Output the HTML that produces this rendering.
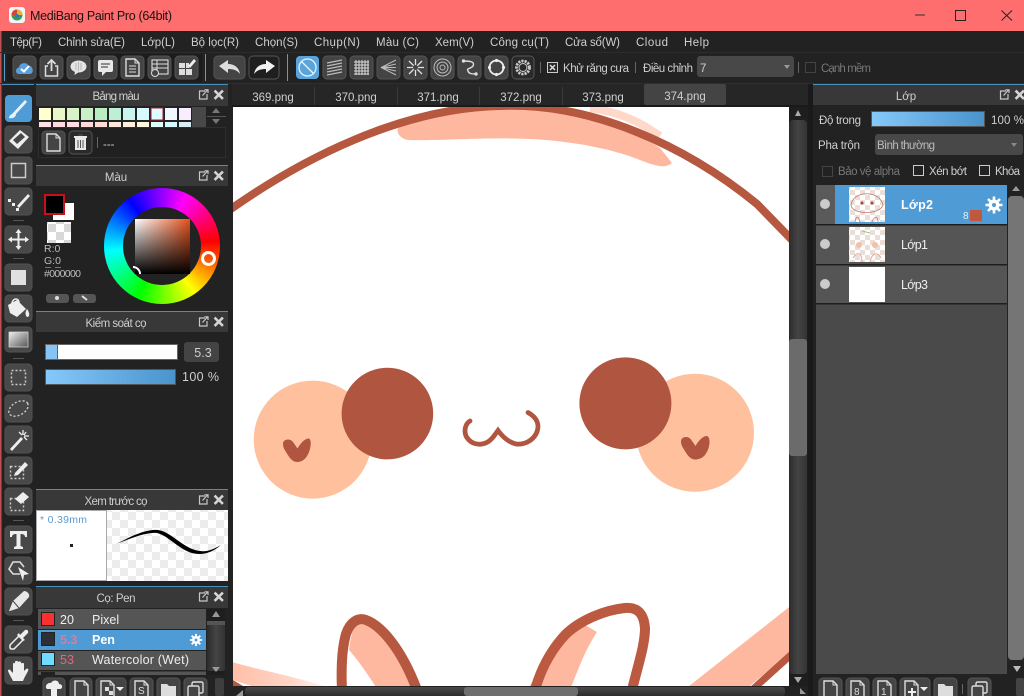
<!DOCTYPE html>
<html><head><meta charset="utf-8"><style>
html,body{margin:0;padding:0;width:1024px;height:696px;overflow:hidden;background:#222}
svg{position:absolute;left:0;top:0}
text{font-family:"Liberation Sans","Noto Sans CJK JP",sans-serif;font-size:11.5px;fill:#cfcfcf}
#wheel{position:absolute;left:104px;top:188px;width:116px;height:116px;border-radius:50%;background:conic-gradient(from 85deg,#f00,#ff0,#0f0,#0ff,#00f,#f0f,#f00)}
#hole{position:absolute;left:19px;top:19px;width:78px;height:78px;border-radius:50%;background:#222}
#sq{position:absolute;left:135px;top:219px;width:55px;height:55px;background:linear-gradient(to bottom,rgba(0,0,0,0),#000),linear-gradient(to right,#fff,#e4511c)}
#mk{position:absolute;left:201px;top:251px;width:9px;height:9px;border:3px solid #fff;border-radius:50%;background:#e8571c00;box-shadow:inset 0 0 0 1px #e06020}
#sm{position:absolute;left:133px;top:266px;width:8px;height:8px;border-top:2px solid #fff;border-right:2px solid #fff;border-radius:0 8px 0 0;box-sizing:border-box}
</style></head><body>
<svg width="1024" height="696" viewBox="0 0 1024 696" xmlns="http://www.w3.org/2000/svg">
<defs>
<pattern id="ck" width="16" height="16" patternUnits="userSpaceOnUse"><rect width="16" height="16" fill="#fff"/><rect width="8" height="8" fill="#ececec"/><rect x="8" y="8" width="8" height="8" fill="#ececec"/></pattern>
<pattern id="ck2" width="10" height="10" patternUnits="userSpaceOnUse"><rect width="10" height="10" fill="#fff"/><rect width="5" height="5" fill="#eadfd8"/><rect x="5" y="5" width="5" height="5" fill="#eadfd8"/></pattern>
<pattern id="ck3" width="16" height="16" patternUnits="userSpaceOnUse"><rect width="16" height="16" fill="#fff"/><rect width="8" height="8" fill="#d8d8d8"/><rect x="8" y="8" width="8" height="8" fill="#d8d8d8"/></pattern>
<linearGradient id="bar" x1="0" x2="1"><stop offset="0" stop-color="#86c8fa"/><stop offset="1" stop-color="#4a93cc"/></linearGradient>
<linearGradient id="sb" x1="0" x2="1"><stop offset="0" stop-color="#2c2c2c"/><stop offset=".5" stop-color="#444"/><stop offset="1" stop-color="#333"/></linearGradient>
<linearGradient id="sbh" x1="0" x2="0" y1="0" y2="1"><stop offset="0" stop-color="#4a4a4a"/><stop offset="1" stop-color="#2c2c2c"/></linearGradient>
<linearGradient id="gr" x1="0" x2="1" y1="0" y2="1"><stop offset="0" stop-color="#f0f0f0"/><stop offset="1" stop-color="#555"/></linearGradient>
<linearGradient id="fade1" x1="0" x2="1"><stop offset="0" stop-color="#ffbda6"/><stop offset=".6" stop-color="#ffd6c8"/><stop offset="1" stop-color="#ffe6dc" stop-opacity=".3"/></linearGradient>
<rect id="b" width="23" height="23" rx="4" fill="#444" stroke="#555"/>
<rect id="t" width="27" height="27" rx="4" fill="#484848" stroke="#525252"/>
<g id="pop"><path d="M7 2H1.500V10H9V5" fill="none" stroke="#c8c8c8" stroke-width="1.200"/><path d="M4.500 6.500L9.500 1M6.500 0.800H10V4" fill="none" stroke="#c8c8c8" stroke-width="1.200"/></g>
<g id="cl"><path d="M1.500 1.500L8 8M8 1.500L1.500 8" stroke="#d4d4d4" stroke-width="2.600" stroke-linecap="square"/></g>
<g id="gear"><circle r="5.500" fill="#fff"/><g stroke="#fff" stroke-width="2.600"><path d="M0-8.500V8.500M-8.500 0H8.500M-6-6L6 6M-6 6L6-6"/></g><circle r="2" fill="#4f9bd5"/></g>
<g id="docI"><path d="M5 3H14L18 7V20H5Z" fill="none" stroke="#ddd" stroke-width="1.400"/><path d="M14 3V7H18" fill="none" stroke="#ddd"/></g>
<g id="copyI"><rect x="8" y="4" width="11" height="11" rx="1.500" fill="none" stroke="#ddd" stroke-width="1.400"/><rect x="4" y="8" width="11" height="11" rx="1.500" fill="#444" stroke="#ddd" stroke-width="1.400"/></g>
<g id="folderI"><path d="M4 6H10L12 8H19V19H4Z" fill="#ddd"/></g>
</defs>

<!-- base -->
<rect width="1024" height="696" fill="#222"/>
<rect width="1024" height="31" fill="#ff6e6e"/>
<rect y="31" width="1.500" height="665" fill="#c05050"/>
<rect y="52" width="1024" height="1" fill="#2c2c2c"/>
<rect y="83" width="1024" height="1" fill="#2e2e2e"/>
<!-- title -->
<rect x="9" y="7" width="16" height="16" rx="3" fill="#f4f4f4"/>
<circle cx="17" cy="15" r="5.500" fill="#3c9a52"/><path d="M17 9.500A5.500 5.500 0 0 1 22.500 15H17Z" fill="#e9b530"/><path d="M11.500 15A5.500 5.500 0 0 1 17 9.500V15Z" fill="#d8443c"/><circle cx="17" cy="16" r="2" fill="#2f78c4"/>
<text x="30" y="20" style="font-size:12.500px;fill:#1c1010" textLength="142">MediBang Paint Pro (64bit)</text>
<path d="M915 15H925" stroke="#333" stroke-width="1"/>
<rect x="955.500" y="10.500" width="10" height="10" fill="none" stroke="#222"/>
<path d="M1001.500 10.500L1012 20.500M1012 10.500L1001.500 20.500" stroke="#222" stroke-width="1"/>
<!-- menu -->
<text x="10" y="46" textLength="32">Tệp(F)</text>
<text x="58" y="46" textLength="67">Chỉnh sửa(E)</text>
<text x="141" y="46" textLength="34">Lớp(L)</text>
<text x="191" y="46" textLength="48">Bộ lọc(R)</text>
<text x="255" y="46" textLength="43">Chọn(S)</text>
<text x="314" y="46" textLength="46">Chụp(N)</text>
<text x="376" y="46" textLength="43">Màu (C)</text>
<text x="435" y="46" textLength="39">Xem(V)</text>
<text x="490" y="46" textLength="59">Công cụ(T)</text>
<text x="565" y="46" textLength="55">Cửa sổ(W)</text>
<text x="636" y="46" textLength="32">Cloud</text>
<text x="684" y="46" textLength="25">Help</text>
<!-- toolbar -->
<rect x="4" y="54" width="1" height="27" fill="#5a9ec8"/><rect x="205" y="54" width="1" height="27" fill="#5a9ec8"/><rect x="287" y="54" width="1" height="27" fill="#5a9ec8"/>
<rect x="7" y="54" width="195" height="28" fill="#1c1c1c"/>
<g transform="translate(13,56)"><use href="#b"/><path d="M6 18C2 18 2 12 6 11.500C6.500 7 13 5.500 15.500 9.500C19.500 9 22 17 17 18Z" fill="#5aa0dc"/><path d="M8 13L11 15.500L16 10" stroke="#fff" stroke-width="2" fill="none"/></g>
<g transform="translate(40,56)"><use href="#b"/><path d="M8 10H5.500V20H17.500V10H15" fill="none" stroke="#ddd" stroke-width="1.500"/><path d="M11.500 15V5M7.500 8L11.500 4L15.500 8" fill="none" stroke="#ddd" stroke-width="1.800"/></g>
<g transform="translate(67,56)"><use href="#b"/><ellipse cx="11.500" cy="10.500" rx="8" ry="6" fill="#e4e4e4"/><path d="M8 15L7.500 19L12 16Z" fill="#e4e4e4"/><path d="M9 7V14M11.500 6V15M14 7V14" stroke="#999" stroke-width=".6"/></g>
<g transform="translate(94,56)"><use href="#b"/><rect x="4" y="4" width="15" height="12" rx="2" fill="#e8e8e8"/><path d="M8 16V20L12 16Z" fill="#e8e8e8"/><path d="M7 8H16M7 11H14" stroke="#555" stroke-width="1.200"/></g>
<g transform="translate(121,56)"><use href="#b"/><use href="#docI"/><path d="M8 10H15M8 13H15M8 16H15" stroke="#ddd"/></g>
<g transform="translate(148,56)"><use href="#b"/><rect x="4" y="4" width="16" height="14" fill="none" stroke="#ddd" stroke-width="1.100"/><path d="M4 8H20M4 12H20M9 4V18" stroke="#ddd"/><circle cx="7" cy="17" r="3.500" fill="#444" stroke="#ddd"/></g>
<g transform="translate(175,56)"><use href="#b"/><path d="M4 7H10V12H4ZM11 7H14V12H11ZM4 13H10V19H4ZM11 13H17V19H11Z" fill="#ddd"/><path d="M13 10L19 3L21 5L15 12Z" fill="#eee"/></g>
<g transform="translate(214,56)"><rect width="31" height="23" rx="4" fill="#444" stroke="#555"/><path d="M5 10L14 4V8C21 8 25 12 26 18C23 14 19 13 14 13V17Z" fill="#ddd"/></g>
<g transform="translate(249,56)"><rect width="30" height="23" rx="4" fill="#1f1f1f" stroke="#555"/><path d="M26 10L17 4V8C10 8 6 12 5 18C8 14 12 13 17 13V17Z" fill="#f0f0f0"/></g>
<g transform="translate(296,56)"><rect width="23" height="23" rx="4" fill="#5aa4dc"/><circle cx="11.500" cy="11.500" r="8.500" fill="none" stroke="#e8f2fa" stroke-width="1.300"/><path d="M5.500 5.500L17.500 17.500" stroke="#e8f2fa" stroke-width="1.300"/></g>
<g transform="translate(323,56)"><use href="#b"/><path d="M4 7L19 4M4 10L19 7M4 13L19 10M4 16L19 13M4 19L19 16" stroke="#bbb" stroke-width="1.200"/></g>
<g transform="translate(350,56)"><use href="#b"/><path d="M6 4V19M9 4V19M12 4V19M15 4V19M18 4V19M4 6H19M4 9H19M4 12H19M4 15H19M4 18H19" stroke="#ddd"/></g>
<g transform="translate(377,56)"><use href="#b"/><path d="M4 11.500L19 4M4 11.500L19 8M4 11.500H19M4 11.500L19 15M4 11.500L19 19" stroke="#bbb"/></g>
<g transform="translate(404,56)"><use href="#b"/><path d="M11.500 3V20M3 11.500H20M5 5L18 18M18 5L5 18" stroke="#e0e0e0" stroke-width="1.300"/><circle cx="11.500" cy="11.500" r="2.500" fill="#444"/></g>
<g transform="translate(431,56)"><use href="#b"/><circle cx="11.500" cy="11.500" r="8.500" fill="none" stroke="#bbb"/><circle cx="11.500" cy="11.500" r="5.500" fill="none" stroke="#bbb"/><circle cx="11.500" cy="11.500" r="2.500" fill="none" stroke="#bbb"/></g>
<g transform="translate(458,56)"><use href="#b"/><path d="M6 5C13 5 17 6 15 10C13 13 8 12 10 15C11 18 14 18 18 18" fill="none" stroke="#ddd" stroke-width="1.400"/><circle cx="5.500" cy="5" r="1.700" fill="#ddd"/><circle cx="18" cy="18" r="1.700" fill="#ddd"/></g>
<g transform="translate(485,56)"><use href="#b"/><circle cx="11.500" cy="11.500" r="7" fill="none" stroke="#eee" stroke-width="1.800"/><g fill="#eee"><circle cx="11.500" cy="4.500" r="1.600"/><circle cx="18.500" cy="11.500" r="1.600"/><circle cx="11.500" cy="18.500" r="1.600"/><circle cx="4.500" cy="11.500" r="1.600"/></g></g>
<g transform="translate(512,56)"><rect width="22" height="23" rx="4" fill="#2a2a2a" stroke="#555"/><circle cx="11" cy="11.500" r="6.500" fill="none" stroke="#ccc" stroke-width="2.800" stroke-dasharray="2.200 1"/><circle cx="11" cy="11.500" r="4" fill="none" stroke="#ccc"/></g>
<rect x="540" y="62" width="1" height="11" fill="#666"/>
<rect x="547.500" y="62.500" width="10" height="10" fill="#2a2a2a" stroke="#ccc"/><path d="M550 65L555 70M555 65L550 70" stroke="#ddd" stroke-width="1.500"/>
<text x="563" y="72" textLength="66">Khử răng cưa</text>
<rect x="635" y="62" width="1" height="11" fill="#666"/>
<text x="643" y="72" textLength="50">Điều chỉnh</text>
<rect x="697" y="56" width="97" height="21" rx="3" fill="#484848"/>
<text x="700" y="72" fill="#ccc">7</text>
<path d="M784 65L790 65L787 69Z" fill="#999"/>
<rect x="798" y="62" width="1" height="11" fill="#666"/>
<rect x="805.500" y="62.500" width="10" height="10" fill="none" stroke="#444"/>
<text x="821" y="72" style="fill:#777" textLength="50">Cạnh mềm</text>

<!-- tabs -->
<rect x="232" y="84" width="576" height="23" fill="#262626"/>
<rect x="232" y="105" width="576" height="2" fill="#1a1a1a"/>
<path d="M314.500 87V105M397.500 87V105M479.500 87V105M562.500 87V105" stroke="#3a3a3a"/>
<rect x="644" y="84" width="82" height="21" rx="2" fill="#444"/>
<text x="273" y="101" text-anchor="middle">369.png</text><text x="356" y="101" text-anchor="middle">370.png</text><text x="438" y="101" text-anchor="middle">371.png</text><text x="521" y="101" text-anchor="middle">372.png</text><text x="603" y="101" text-anchor="middle">373.png</text><text x="685" y="100" text-anchor="middle">374.png</text>

<!-- canvas -->
<rect x="233" y="107" width="556" height="579" fill="#fff"/>
<svg x="233" y="107" width="556" height="579" viewBox="233 107 556 579">
<path d="M590 108C620 112 640 122 660 136" fill="none" stroke="#ffd8ca" stroke-width="8"/>
<path d="M398 128C430 112 470 104 510 105C560 106 615 118 660 148L672 163C665 169 655 166 640 160C610 148 570 141 530 139C490 137 440 141 410 140C402 140 396 134 398 128Z" fill="#ffb8a0"/>
<path d="M228 211C300 160 400 108 500 106C590 102 685 145 757 204L793 241" fill="none" stroke="#b5583f" stroke-width="8"/>
<circle cx="312.700" cy="439.600" r="59" fill="#ffc09d"/>
<circle cx="695" cy="432.800" r="59" fill="#ffc09d"/>
<circle cx="387.400" cy="413.600" r="45.800" fill="#b05540"/>
<circle cx="625.400" cy="403.400" r="46" fill="#b05540"/>
<path id="hrt" d="M283 444C283 439 290 438 293 442L297.500 448.500C300 444 305 438 309 438.500C312 440 311 450 307 456C304 461 300 462 297 462C292 462 289 457 286 452C284 449 283 447 283 444Z" fill="#b05540"/>
<path transform="translate(398,-2.500)" d="M283 444C283 439 290 438 293 442L297.500 448.500C300 444 305 438 309 438.500C313 440 312 450 308 456C305 461 300 462 297 462C292 462 289 457 286 452C284 449 283 447 283 444Z" fill="#b05540"/>
<path d="M470 421C465 424 464 431 466 436C470 443 476 445 482 444C490 443 494 436 498 430.500C502 436 508 442 516 444C524 445 532 441 536 434C540 426 538 418 528 412.500" fill="none" stroke="#b05540" stroke-width="4.800" stroke-linecap="round"/>
<!-- ear left -->
<path d="M349 650C358 660 368 675 378 690L417 690C402 650 382 626 366 620C358 617 352 625 349 650Z" fill="#ffb8a0"/>
<path d="M342 690C341 668 342 648 346 634C350 622 358 617 366 620C382 626 402 650 417 690" fill="none" stroke="#b5583f" stroke-width="10"/>
<!-- ear right -->
<path d="M528 690C540 665 555 640 580 622L597 632C585 650 578 670 570 690Z" fill="#ffb8a0"/>
<path d="M535 690C542 665 553 648 565 635C580 620 605 610 625 608C640 607 644 616 645 628C645 645 638 665 632 690" fill="none" stroke="#bb5a40" stroke-width="10"/>
<!-- pink lower right -->
<path d="M684 690L793 604V650L745 690Z" fill="#ffb8a0"/>
<path d="M752 690L793 653" fill="none" stroke="#b5583f" stroke-width="7"/>
<!-- pink lower left -->
<path d="M228 661C262 671 300 677 335 690H265C250 686 240 682 228 678Z" fill="url(#fade1)"/>
<path d="M228 680L245 690" stroke="#b5583f" stroke-width="5"/>
</svg>
<!-- canvas scrollbars -->
<rect x="789" y="107" width="19" height="579" fill="#1e1e1e"/>
<rect x="789" y="120" width="18" height="554" rx="4" fill="url(#sb)"/>
<rect x="789" y="339" width="18" height="117" rx="3" fill="#6b6b6b"/>
<path d="M795 116L801 116L798 110Z" fill="#aaa"/><path d="M794 677H802L798 683Z" fill="#aaa"/>
<rect x="808" y="84" width="5" height="612" fill="#1a1a1a"/>
<rect x="233" y="686" width="575" height="10" fill="#222"/>
<rect x="245" y="687" width="540" height="9" rx="3" fill="url(#sbh)"/>
<rect x="464" y="687" width="114" height="9" rx="3" fill="#6e6e6e"/>
<path d="M243 690L236 696H243Z" fill="#999"/><path d="M800 688L806 694H800Z" fill="#999"/>

<!-- left tools -->
<rect x="2" y="84" width="32" height="1" fill="#4a90b8"/>
<rect x="5" y="95" width="27" height="27" rx="4" fill="#4f9bd5"/>
<path d="M12 114C9 115 9 118 9 118C13 119 16 117 16 114L27 102L25 100Z" fill="#e8f3fb"/>
<g transform="translate(5,126)"><use href="#t"/><path d="M4 15L15 4L24 11L13 23Z" fill="#eee"/><path d="M8 14L16 7L20 11L12 18Z" fill="#484848"/></g>
<g transform="translate(5,157)"><use href="#t"/><rect x="6.500" y="6.500" width="14" height="14" fill="none" stroke="#ccc" stroke-width="1.500"/></g>
<g transform="translate(5,188)"><use href="#t"/><path d="M12 18L23 6L25 8L14 20Z" fill="#eee"/><rect x="3" y="11" width="3" height="3" fill="#eee"/><rect x="7" y="15" width="3" height="3" fill="#eee"/><rect x="11" y="20" width="3" height="3" fill="#eee"/></g>
<rect x="13" y="220" width="11" height="1" fill="#555"/>
<g transform="translate(5,226)"><use href="#t"/><path d="M13.500 4V23M4 13.500H23" stroke="#eee" stroke-width="2"/><path d="M10.500 7L13.500 3L16.500 7ZM10.500 20L13.500 24L16.500 20ZM7 10.500L3 13.500L7 16.500ZM20 10.500L24 13.500L20 16.500Z" fill="#eee"/></g>
<rect x="13" y="258" width="11" height="1" fill="#555"/>
<g transform="translate(5,264)"><use href="#t"/><rect x="6" y="6" width="15" height="15" fill="#e0e0e0"/></g>
<g transform="translate(5,295)"><use href="#t"/><path d="M3 10L12 5L21 14L12 22L5 18Z" fill="#eee"/><path d="M7 9C7 3 14 2 14 8" fill="none" stroke="#eee" stroke-width="1.500"/><path d="M22 14C25 18 25 22 22 22C20 20 20 17 22 14Z" fill="#eee"/></g>
<g transform="translate(5,327)"><rect width="27" height="25" rx="4" fill="#484848" stroke="#525252"/><rect x="4" y="5" width="19" height="15" fill="url(#gr)" stroke="#ddd" stroke-width=".7"/></g>
<rect x="13" y="358" width="11" height="1" fill="#555"/>
<g transform="translate(5,364)"><use href="#t"/><rect x="6.500" y="6.500" width="14" height="14" fill="none" stroke="#ccc" stroke-width="1.500" stroke-dasharray="2 2"/></g>
<g transform="translate(5,395)"><use href="#t"/><ellipse cx="13.500" cy="13.500" rx="10.500" ry="6.500" transform="rotate(-30 13.500 13.500)" fill="none" stroke="#ccc" stroke-width="1.400" stroke-dasharray="2 2"/></g>
<g transform="translate(5,426)"><use href="#t"/><path d="M5 23L16 11L18 13L7 25Z" fill="#eee"/><path d="M18 4V9M21 6L19 9M24 10H19M14 6L17 9M22 14L19 11" stroke="#eee" stroke-width="1.300"/></g>
<g transform="translate(5,457)"><use href="#t"/><rect x="5.500" y="9.500" width="13" height="12" fill="none" stroke="#ccc" stroke-width="1.400" stroke-dasharray="2 2"/><path d="M10 16L20 5L23 8L13 18L9 19Z" fill="#eee"/></g>
<g transform="translate(5,488)"><use href="#t"/><rect x="5.500" y="10.500" width="13" height="12" fill="none" stroke="#ccc" stroke-width="1.400" stroke-dasharray="2 2"/><path d="M10 11L18 4L24 9L16 16Z" fill="#eee"/></g>
<rect x="13" y="520" width="11" height="1" fill="#555"/>
<g transform="translate(5,526)"><use href="#t"/><path d="M5 5H22V11H20C20 8.500 18 8 15.500 8V20L18 21V23H9V21L11.500 20V8C9 8 7 8.500 7 11H5Z" fill="#eee"/></g>
<g transform="translate(5,557)"><use href="#t"/><path d="M15 17H8L4 12L8 5H15L19 10" fill="none" stroke="#ddd" stroke-width="1.600"/><path d="M13 10L24 17L19 18L18 24Z" fill="#eee"/></g>
<g transform="translate(5,588)"><use href="#t"/><path d="M4 23L8 13L19 3C22 3 25 6 24 9L14 20L5 23Z" fill="#e8e8e8"/><path d="M8 13L14 20" stroke="#484848"/></g>
<rect x="13" y="620" width="11" height="1" fill="#555"/>
<g transform="translate(5,626)"><use href="#t"/><path d="M5 22V19L14 10L18 14L9 23H6Z" fill="#484848" stroke="#eee" stroke-width="1.500"/><path d="M15 9L20 4C22 3 24 5 23 7L18 12L20 14L18 15L12 9L14 7Z" fill="#eee"/></g>
<g transform="translate(5,657)"><use href="#t"/><path d="M8 24C6 20 4 17 3 14C3 12 5 12 6 14L8 16V7C8 5.500 10 5.500 10 7V12V5C10 3.500 13 3.500 13 5V12V5.500C13 4 16 4 16 5.500V12V7C16 5.500 19 5.500 19 7V14L21 12C23 11 24 12 23 14C21 18 19 21 18 24Z" fill="#eee"/></g>

<!-- palette panel -->
<rect x="36" y="84" width="192" height="1" fill="#4a90b8"/>
<rect x="36" y="85" width="192" height="21" fill="#383838"/>
<text x="116" y="100" text-anchor="middle" textLength="47">Bảng màu</text>
<use href="#pop" x="198" y="89"/><use href="#cl" x="214" y="90"/>
<g>
<rect x="39" y="108" width="12" height="12" fill="#ffffcf"/><rect x="53" y="108" width="12" height="12" fill="#e8f6c8"/><rect x="67" y="108" width="12" height="12" fill="#d8f3c6"/><rect x="81" y="108" width="12" height="12" fill="#c8efc6"/><rect x="95" y="108" width="12" height="12" fill="#baecc4"/><rect x="109" y="108" width="12" height="12" fill="#bdeed6"/><rect x="123" y="108" width="12" height="12" fill="#c8f6ee"/><rect x="137" y="108" width="12" height="12" fill="#d6fbff"/><rect x="151" y="108" width="12" height="12" fill="#e0fcff" stroke="#a02030"/><rect x="165" y="108" width="12" height="12" fill="#f2f8ff"/><rect x="179" y="108" width="12" height="12" fill="#f8ecff"/>
<rect x="39" y="122" width="12" height="5" fill="#ffe0e4"/><rect x="53" y="122" width="12" height="5" fill="#ffd8e2"/><rect x="67" y="122" width="12" height="5" fill="#ffdde2"/><rect x="81" y="122" width="12" height="5" fill="#ffd8da"/><rect x="95" y="122" width="12" height="5" fill="#ffdcd8"/><rect x="109" y="122" width="12" height="5" fill="#ffe6da"/><rect x="123" y="122" width="12" height="5" fill="#ffeedc"/><rect x="137" y="122" width="12" height="5" fill="#fff6de"/><rect x="151" y="122" width="12" height="5" fill="#e0fff8"/><rect x="165" y="122" width="12" height="5" fill="#d6f8ff"/><rect x="179" y="122" width="12" height="5" fill="#d8eef6"/>
</g>
<rect x="192" y="107" width="14" height="20" fill="#484848"/>
<path d="M212 113L216 108L220 113ZM212 119L216 124L220 119Z" fill="#777"/><path d="M207 116.500H226" stroke="#555"/>
<rect x="38.500" y="127.500" width="187" height="30" fill="#202020" stroke="#2e2e2e"/>
<g transform="translate(42,131)"><rect width="23" height="23" rx="4" fill="#444" stroke="#555"/><use href="#docI"/></g>
<g transform="translate(69,131)"><rect width="23" height="23" rx="4" fill="#2a2a2a" stroke="#555"/><rect x="6" y="7" width="11" height="12" fill="#e8e8e8"/><rect x="5" y="5" width="13" height="2" fill="#e8e8e8"/><path d="M9 4H14M9 9V17M11.500 9V17M14 9V17" stroke="#555"/></g>
<rect x="97" y="137" width="1" height="11" fill="#666"/>
<text x="103" y="148">---</text>

<!-- colour panel -->
<rect x="36" y="165" width="192" height="1" fill="#4a90b8"/>
<rect x="36" y="166" width="192" height="20" fill="#383838"/>
<text x="116" y="181" text-anchor="middle">Màu</text>
<use href="#pop" x="198" y="170"/><use href="#cl" x="214" y="171"/>
<rect x="53" y="203" width="21" height="17" fill="#fff"/>
<rect x="45" y="195" width="19" height="19" fill="#000" stroke="#c8101c" stroke-width="2"/>
<rect x="47" y="222" width="24" height="21" fill="url(#ck3)"/>
<text x="44" y="252" style="font-size:10.500px;fill:#bbb">R:0</text>
<text x="44" y="264" style="font-size:10.500px;fill:#bbb">G:0</text>
<path d="M45 267.500H51M55 267.500H61" stroke="#777"/>
<text x="44" y="277" style="font-size:10.500px;fill:#bbb" textLength="37">#000000</text>
<rect x="46" y="294" width="23" height="9" rx="3" fill="#555"/><circle cx="57" cy="298" r="2" fill="#ddd"/>
<rect x="73" y="294" width="23" height="9" rx="3" fill="#555"/><path d="M82 296L87 300" stroke="#ddd" stroke-width="2"/>

<!-- brush control -->
<rect x="36" y="311" width="192" height="1" fill="#4a90b8"/>
<rect x="36" y="312" width="192" height="20" fill="#383838"/>
<text x="116" y="327" text-anchor="middle" textLength="61">Kiểm soát cọ</text>
<use href="#pop" x="198" y="316"/><use href="#cl" x="214" y="317"/>
<rect x="45" y="344" width="133" height="16" fill="#666"/>
<rect x="46" y="345" width="131" height="14" fill="#fff"/>
<rect x="46" y="345" width="11" height="14" fill="#86c4f6"/><rect x="57" y="345" width="1" height="14" fill="#33709c"/>
<rect x="184" y="342" width="35" height="20" rx="3" fill="#444"/>
<text x="203" y="357" text-anchor="middle" style="font-size:12.500px">5.3</text>
<rect x="45" y="369" width="131" height="16" fill="#555"/>
<rect x="46" y="370" width="129" height="14" fill="url(#bar)"/>
<text x="182" y="381" textLength="37" style="font-size:12.500px">100 %</text>

<!-- preview -->
<rect x="36" y="489" width="192" height="1" fill="#4a90b8"/>
<rect x="36" y="490" width="192" height="20" fill="#383838"/>
<text x="116" y="505" text-anchor="middle" textLength="63">Xem trước cọ</text>
<use href="#pop" x="198" y="494"/><use href="#cl" x="214" y="495"/>
<rect x="107" y="510" width="121" height="71" fill="url(#ck)"/>
<rect x="36.500" y="510.500" width="70" height="70" fill="#fff" stroke="#aaa"/>
<text x="40" y="523" style="font-size:10.500px;fill:#5a9bd0" textLength="47">* 0.39mm</text>
<rect x="70" y="544" width="3" height="3" fill="#222"/>
<path d="M116 544C130 537 145 529 158 530C172 532 183 549 200 551C208 552 214 549 221 545C214 551 207 554 199 554C182 554 170 536 157 533C145 532 130 539 116 544Z" fill="#000"/>

<!-- brush panel -->
<rect x="36" y="586" width="192" height="1" fill="#4a90b8"/>
<rect x="36" y="587" width="192" height="21" fill="#383838"/>
<text x="116" y="602" text-anchor="middle" textLength="39">Cọ: Pen</text>
<use href="#pop" x="198" y="591"/><use href="#cl" x="214" y="592"/>
<rect x="38" y="609" width="168" height="66" fill="#555"/>
<rect x="38" y="630" width="168" height="20" fill="#4f9bd5"/>
<rect x="38" y="629" width="168" height="1" fill="#222"/><rect x="38" y="650" width="168" height="1" fill="#222"/><rect x="38" y="670" width="168" height="1.500" fill="#222"/>
<rect x="41.500" y="612.500" width="13" height="13" fill="#fb3030" stroke="#222"/>
<rect x="41.500" y="632.500" width="13" height="13" fill="#2e2e38" stroke="#222"/>
<rect x="41.500" y="652.500" width="13" height="13" fill="#70dcff" stroke="#222"/>
<rect x="41" y="672" width="14" height="3" fill="#222"/>
<text x="60" y="624" style="font-size:12.500px;fill:#eee">20</text>
<text x="92" y="624" style="font-size:12.500px;fill:#eee">Pixel</text>
<text x="60" y="644" style="font-size:12.500px;font-weight:bold;fill:#e07a98">5.3</text>
<text x="92" y="644" style="font-size:12.500px;font-weight:bold;fill:#fff">Pen</text>
<use href="#gear" transform="translate(196,640) scale(.72)"/>
<text x="60" y="664" style="font-size:12.500px;fill:#e06a80">53</text>
<text x="92" y="664" style="font-size:12.500px;fill:#eee" textLength="97">Watercolor (Wet)</text>
<rect x="207" y="609" width="18" height="66" fill="#1e1e1e"/>
<rect x="207" y="621" width="18" height="50" rx="2" fill="url(#sb)"/><rect x="207" y="621" width="18" height="4" fill="#555"/>
<path d="M212 617L216 611L220 617Z" fill="#999"/><path d="M212 667H220L216 672Z" fill="#999"/>
<g transform="translate(43,678)"><rect width="22" height="24" rx="4" fill="#444" stroke="#555"/><path d="M4 11C1 8 5 4 8 5C10 1 16 2 16 6C20 6 20 11 17 11H14V18H8V11Z" fill="#eee"/></g>
<g transform="translate(70,678)"><rect width="22" height="24" rx="4" fill="#444" stroke="#555"/><use href="#docI"/></g>
<g transform="translate(96,678)"><rect width="30" height="24" rx="4" fill="#444" stroke="#555"/><use href="#docI"/><rect x="9" y="9" width="4" height="4" fill="#ddd"/><rect x="13" y="13" width="4" height="4" fill="#ddd"/><path d="M20 9H28L24 13Z" fill="#eee"/></g>
<g transform="translate(130,678)"><rect width="23" height="24" rx="4" fill="#444" stroke="#555"/><use href="#docI"/><text x="8" y="16" style="font-size:10px;fill:#ddd">S</text></g>
<g transform="translate(157,678)"><rect width="23" height="24" rx="4" fill="#444" stroke="#555"/><use href="#folderI"/></g>
<g transform="translate(184,678)"><rect width="23" height="24" rx="4" fill="#444" stroke="#555"/><use href="#copyI"/></g>
<rect x="215" y="678" width="9" height="18" rx="2" fill="#3e3e3e"/>

<!-- layer panel -->
<rect x="813" y="84" width="211" height="1" fill="#4a90b8"/>
<rect x="813" y="85" width="211" height="20" fill="#383838"/>
<text x="906" y="100" text-anchor="middle">Lớp</text>
<use href="#pop" x="999" y="89"/><use href="#cl" x="1015" y="90"/>
<text x="819" y="124" textLength="42">Độ trong</text>
<rect x="871" y="111" width="114" height="16" fill="#555"/>
<rect x="872" y="112" width="112" height="14" fill="url(#bar)"/>
<text x="991" y="124" textLength="33">100 %</text>
<text x="818" y="149" textLength="42">Pha trộn</text>
<rect x="875" y="134" width="148" height="21" rx="3" fill="#484848"/>
<text x="877" y="149" textLength="58" style="fill:#bbb">Bình thường</text>
<path d="M1011 143H1017L1014 147Z" fill="#888"/>
<rect x="822.500" y="166.500" width="10" height="10" fill="none" stroke="#444"/>
<text x="838" y="175" style="fill:#777" textLength="62">Bảo vệ alpha</text>
<rect x="913.500" y="165.500" width="10" height="10" fill="#222" stroke="#ccc"/>
<text x="929" y="175" textLength="38">Xén bớt</text>
<rect x="979.500" y="165.500" width="10" height="10" fill="#222" stroke="#ccc"/>
<text x="995" y="175" textLength="25">Khóa</text>
<rect x="816" y="185" width="191" height="489" fill="#4a4a4a"/>
<rect x="816" y="185" width="191" height="39" fill="#5a5a5a"/><rect x="835" y="185" width="172" height="39" fill="#4f9bd5"/>
<rect x="816" y="224" width="191" height="1.500" fill="#1e1e1e"/>
<rect x="816" y="225.500" width="191" height="38.500" fill="#555"/>
<rect x="816" y="264" width="191" height="1.500" fill="#1e1e1e"/>
<rect x="816" y="265.500" width="191" height="38" fill="#555"/>
<rect x="816" y="303" width="191" height="1.500" fill="#1e1e1e"/>
<circle cx="825" cy="204" r="5" fill="#ccc"/><circle cx="825" cy="244" r="5" fill="#ccc"/><circle cx="825" cy="284" r="5" fill="#ccc"/>
<rect x="849" y="187" width="36" height="35" fill="url(#ck2)"/>
<g fill="none" stroke="#c07a68" stroke-width=".8"><path d="M851 205C853 190 880 190 883 205"/><path d="M855 222C856 216 858 215 860 222M872 222C874 216 878 216 878 222M851 205C852 215 880 215 883 205"/></g>
<circle cx="862" cy="203" r="1.500" fill="#a04a38"/><circle cx="872" cy="203" r="1.500" fill="#a04a38"/>
<rect x="849" y="227" width="36" height="35" fill="url(#ck2)"/>
<g fill="#f4c0a4"><circle cx="859" cy="245" r="3"/><circle cx="875" cy="245" r="3"/></g><path d="M853 258C858 250 862 254 862 262M870 262C872 252 878 252 881 258" fill="none" stroke="#e0a898"/>
<path d="M862 231L870 233" stroke="#90c890"/>
<rect x="849" y="267" width="36" height="35" fill="#fff"/>
<text x="901" y="209" style="font-weight:bold;font-size:12.500px;fill:#fff" textLength="32">Lớp2</text>
<text x="901" y="249" style="font-size:12.500px;fill:#eee" textLength="27">Lớp1</text>
<text x="901" y="289" style="font-size:12.500px;fill:#eee" textLength="27">Lớp3</text>
<text x="963" y="219" style="font-size:10px;fill:#e6f0f8">8</text>
<rect x="970" y="210" width="12" height="11" fill="#c0583e"/>
<use href="#gear" transform="translate(994,205)"/>
<rect x="1007" y="185" width="17" height="489" fill="#222"/>
<rect x="1008" y="196" width="16" height="464" rx="4" fill="#757575"/>
<path d="M1012 191L1016 186L1020 191Z" fill="#999"/>
<path d="M1013 666H1021L1017 672Z" fill="#bbb"/>
<g transform="translate(819,678)"><rect width="23" height="24" rx="4" fill="#444" stroke="#555"/><use href="#docI"/></g>
<g transform="translate(846,678)"><rect width="23" height="24" rx="4" fill="#444" stroke="#555"/><use href="#docI"/><text x="8" y="17" style="font-size:10px;fill:#ddd">8</text></g>
<g transform="translate(873,678)"><rect width="23" height="24" rx="4" fill="#444" stroke="#555"/><use href="#docI"/><text x="8" y="17" style="font-size:10px;fill:#ddd">1</text></g>
<g transform="translate(900,678)"><rect width="30" height="24" rx="4" fill="#444" stroke="#555"/><use href="#docI"/><path d="M8 14H16M12 10V18" stroke="#eee" stroke-width="2"/><path d="M20 9H28L24 13Z" fill="#eee"/></g>
<g transform="translate(934,678)"><rect width="23" height="24" rx="4" fill="#444" stroke="#555"/><use href="#folderI"/></g>
<rect x="962" y="684" width="1" height="10" fill="#666"/>
<g transform="translate(968,678)"><rect width="23" height="24" rx="4" fill="#444" stroke="#555"/><use href="#copyI"/></g>
<rect x="1016" y="678" width="8" height="18" rx="2" fill="#444"/>
</svg>
<div id="wheel"><div id="hole"></div></div>
<div id="sq"></div>
<div id="sm"></div>
<div id="mk"></div>
</body></html>
